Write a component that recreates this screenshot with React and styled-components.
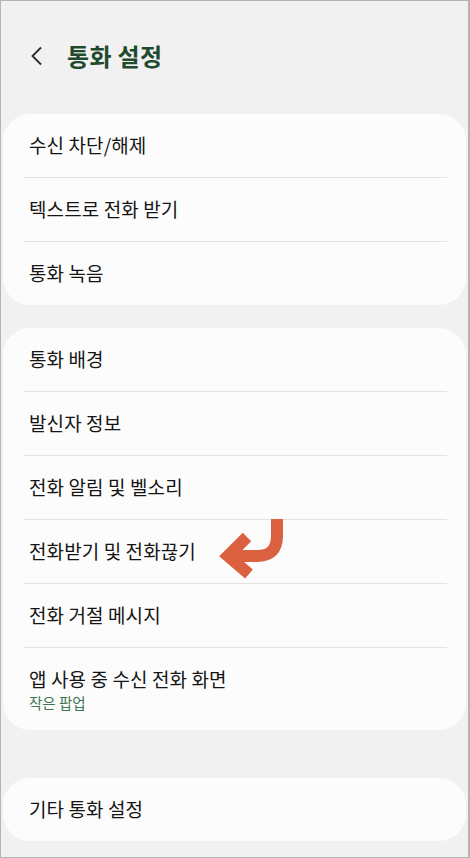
import React from 'react';
import styled, { createGlobalStyle } from 'styled-components';

const GlobalStyle = createGlobalStyle`
  * { box-sizing: border-box; }
  body {
    margin: 0;
    background: #f1f1f1;
    font-family: "Noto Sans CJK KR", "Noto Sans", sans-serif;
  }
`;

const Screen = styled.div`
  width: 470px;
  height: 858px;
  background: #f1f1f1;
  border: 1px solid #b4b4b4;
  border-right-width: 2px;
  padding: 0 2px 0 2px;
  display: flex;
  flex-direction: column;
  overflow: hidden;
`;

const Header = styled.header`
  height: 113px;
  display: flex;
  align-items: center;
  gap: 22px;
  padding: 0 0 4px 26px;
`;

const BackButton = styled.button`
  border: none;
  background: none;
  padding: 0;
  width: 16px;
  height: 22px;
  display: flex;
  align-items: center;
  justify-content: center;
  color: #2a2a2a;
`;

const Title = styled.h1`
  margin: 0;
  font-size: 24px;
  font-weight: 700;
  color: #1f4a2e;
  letter-spacing: 0.3px;
`;

const Card = styled.section`
  background: #fcfcfc;
  border-radius: 27px;
  margin-bottom: ${(p) => p.$gap || 0}px;
  display: flex;
  flex-direction: column;
`;

const Row = styled.div`
  position: relative;
  min-height: ${(p) => (p.$tall ? 82 : 63)}px;
  padding: 0 26px;
  display: flex;
  flex-direction: column;
  justify-content: center;
`;

const Label = styled.span`
  font-size: 19px;
  color: #141414;
  line-height: 1.3;
  letter-spacing: 0.1px;
`;

const SubLabel = styled.span`
  font-size: 14.5px;
  color: #3f7452;
  margin-top: 2px;
  line-height: 1.2;
`;

const Divider = styled.div`
  height: 1px;
  margin: 0 19px 0 21px;
  background: #e3e3e3;
`;

const Pointer = styled.svg`
  position: absolute;
  left: 214px;
  top: -2px;
`;

function ChevronLeft() {
  return (
    <svg width="14" height="20" viewBox="0 0 14 20">
      <path d="M11 1.5 L2.5 10 L11 18.5" fill="none" stroke="currentColor" strokeWidth="1.8" />
    </svg>
  );
}

function CurvedArrow() {
  return (
    <Pointer width="72" height="62" viewBox="0 0 72 62">
      <path
        d="M60 1 L60 18 Q60 38 40 38 L16 38"
        fill="none"
        stroke="#dc6140"
        strokeWidth="12"
      />
      <path
        d="M30 19 L11 38 L32 56"
        fill="none"
        stroke="#dc6140"
        strokeWidth="12"
        strokeLinejoin="miter"
      />
    </Pointer>
  );
}

function SettingsCard({ items, gap }) {
  return (
    <Card $gap={gap}>
      {items.map((item, i) => (
        <React.Fragment key={item.label}>
          {i > 0 && <Divider />}
          <Row $tall={!!item.sub}>
            <Label>{item.label}</Label>
            {item.sub && <SubLabel>{item.sub}</SubLabel>}
            {item.mark && <CurvedArrow />}
          </Row>
        </React.Fragment>
      ))}
    </Card>
  );
}

const groups = [
  {
    gap: 23,
    items: [
      { label: '수신 차단/해제' },
      { label: '텍스트로 전화 받기' },
      { label: '통화 녹음' },
    ],
  },
  {
    gap: 48,
    items: [
      { label: '통화 배경' },
      { label: '발신자 정보' },
      { label: '전화 알림 및 벨소리' },
      { label: '전화받기 및 전화끊기', mark: true },
      { label: '전화 거절 메시지' },
      { label: '앱 사용 중 수신 전화 화면', sub: '작은 팝업' },
    ],
  },
  {
    gap: 0,
    items: [{ label: '기타 통화 설정' }],
  },
];

export default function App() {
  return (
    <>
      <GlobalStyle />
      <Screen>
        <Header>
          <BackButton>
            <ChevronLeft />
          </BackButton>
          <Title>통화 설정</Title>
        </Header>
        {groups.map((g, i) => (
          <SettingsCard key={i} items={g.items} gap={g.gap} />
        ))}
      </Screen>
    </>
  );
}
